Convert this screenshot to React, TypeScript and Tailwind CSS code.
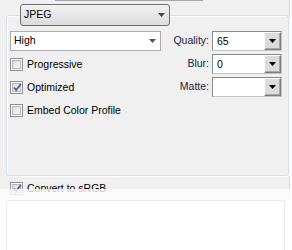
const Arrow = ({ color = "#000" }: { color?: string }) => (
  <svg width="7" height="4" viewBox="0 0 7 4">
    <path d="M0 0h7L3.5 4z" fill={color} />
  </svg>
);

const Check = ({ checked }: { checked?: boolean }) => (
  <span className="relative w-[13px] h-[13px] border border-[#8f8f8f] bg-white p-[1px] flex shrink-0">
    <span className="flex-1 border border-[#b6b6b6] bg-gradient-to-br from-[#dcdcdc] to-[#fafafa]" />
    {checked && (
      <svg className="absolute left-[1px] top-[0px]" width="11" height="11" viewBox="0 0 11 11">
        <path d="M2 5.5l2.2 2.6L9 1.8" stroke="#4a5d8f" strokeWidth="1.8" fill="none" />
      </svg>
    )}
  </span>
);

const EditCombo = ({ value }: { value: string }) => (
  <div className="w-[70px] h-[20px] flex border border-t-[#8a8a8a] border-l-[#8a8a8a] border-r-[#c4c4c4] border-b-[#c4c4c4] bg-white">
    <span className="flex-1 pl-[4px] leading-[18px]">{value}</span>
    <span className="w-[17px] h-[18px] flex items-center justify-center bg-[#dcdcdc] border border-t-white border-l-white border-r-[#7c7c7c] border-b-[#7c7c7c] shadow-[inset_-1px_-1px_0_#a9a9a9]">
      <Arrow />
    </span>
  </div>
);

const Field = ({ label, value }: { label: string; value: string }) => (
  <div className="flex items-center gap-[3px]">
    <span className="w-[48px] text-right text-[#1b2244]">{label}</span>
    <EditCombo value={value} />
  </div>
);

const Row = ({ checked, text, field }: { checked?: boolean; text: string; field?: { label: string; value: string } }) => (
  <div className="flex items-center h-[20px]">
    <label className="flex-1 flex items-center gap-[4px] pt-[1px]">
      <Check checked={checked} />
      <span>{text}</span>
    </label>
    {field && <Field label={field.label} value={field.value} />}
  </div>
);

export default function App() {
  return (
    <div
      className="relative w-[292px] h-[250px] overflow-hidden bg-white text-[10.5px] text-black"
      style={{ fontFamily: '"Liberation Sans", Arial, sans-serif' }}
    >
      <div className="w-[290px] h-[200px] bg-[#f0f0f0] border-r border-[#d6d6d6] pl-[6px] flex flex-col">
        {/* edge of control above */}
        <div className="ml-[49px] w-[148px] h-[1px] bg-[#a8a8a8]" />

        <fieldset className="w-[279px] mt-[3px] h-[172px] border border-[#d5dfe5] rounded-[3px] pl-[3px] pr-[6px] shadow-[inset_1px_1px_0_#fff,1px_1px_0_#fff]">
          <legend className="ml-[10px] w-[150px] h-[22px] flex items-center justify-between pl-[3px] pr-[4px] rounded-[3px] border border-[#707070] bg-gradient-to-b from-[#f2f2f2] to-[#dcdcdc]">
            <span>JPEG</span>
            <Arrow color="#444" />
          </legend>

          <div className="flex flex-col gap-[3px] mt-[5px]">
            <div className="flex items-center h-[20px]">
              <div className="w-[151px] h-[20px] flex items-center justify-between bg-white border border-[#abadb3] pl-[3px] pr-[4px]">
                <span>High</span>
                <Arrow color="#555" />
              </div>
              <div className="flex-1 flex justify-end">
                <Field label="Quality:" value="65" />
              </div>
            </div>
            <Row text="Progressive" field={{ label: "Blur:", value: "0" }} />
            <Row checked text="Optimized" field={{ label: "Matte:", value: "" }} />
            <Row text="Embed Color Profile" />
          </div>
        </fieldset>

        <div className="mt-[5px] pl-[4px] flex items-center gap-[4px]">
          <Check checked />
          <span>Convert to sRGB</span>
        </div>
      </div>

      {/* reflection overlay */}
      <div className="absolute left-0 right-0 top-[189px] bottom-0 bg-gradient-to-b from-white/75 to-white px-[6px] pt-[11px]">
        <div className="w-[279px] h-[60px] border border-[#e6eaed] rounded-[3px] bg-white/30" />
      </div>
    </div>
  );
}
